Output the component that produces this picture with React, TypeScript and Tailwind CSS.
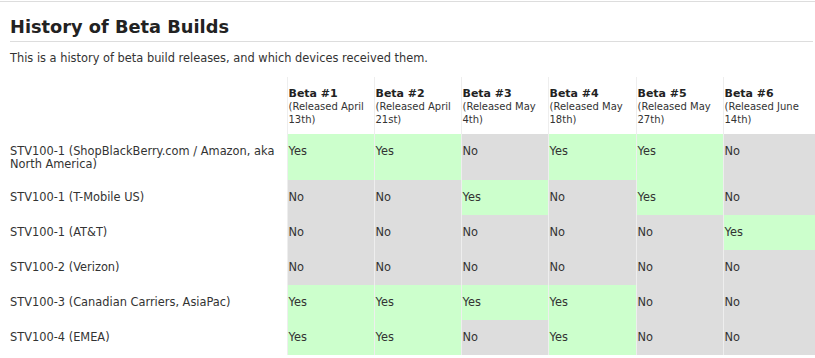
import React from 'react';

const BETAS = [
    { name: 'Beta #1', note: '(Released April 13th)' },
    { name: 'Beta #2', note: '(Released April 21st)' },
    { name: 'Beta #3', note: '(Released May 4th)' },
    { name: 'Beta #4', note: '(Released May 18th)' },
    { name: 'Beta #5', note: '(Released May 27th)' },
    { name: 'Beta #6', note: '(Released June 14th)' },
];

const DEVICES = [
    { name: 'STV100-1 (ShopBlackBerry.com / Amazon, aka North America)', got: [1, 1, 0, 1, 1, 0] },
    { name: 'STV100-1 (T-Mobile US)', got: [0, 0, 1, 0, 1, 0] },
    { name: 'STV100-1 (AT&T)', got: [0, 0, 0, 0, 0, 1] },
    { name: 'STV100-2 (Verizon)', got: [0, 0, 0, 0, 0, 0] },
    { name: 'STV100-3 (Canadian Carriers, AsiaPac)', got: [1, 1, 1, 1, 0, 0] },
    { name: 'STV100-4 (EMEA)', got: [1, 1, 0, 1, 0, 0] },
];

const BetaHistory = () => {
    return (
        <div className="w-[815px] h-[358px] overflow-hidden bg-white text-[#333] font-['DejaVu_Sans',Verdana,sans-serif]">
            <div className="mt-[1px] border-t border-[#dddddd]">
                <h2 className="ml-[10px] mr-[2px] pt-[13px] pb-[2px] text-[17.8px] leading-[24px] font-bold text-[#222] border-b border-[#dddddd]">
                    History of Beta Builds
                </h2>
                <p className="ml-[10px] mt-[9px] text-[11.4px] leading-[14px]">
                    This is a history of beta build releases, and which devices received them.
                </p>
                <table className="mt-[12px] w-[820px] table-fixed border-collapse text-[11.4px] leading-[13px]">
                    <colgroup>
                        <col className="w-[287px]" />
                        <col className="w-[87px]" />
                        <col className="w-[87px]" />
                        <col className="w-[87px]" />
                        <col className="w-[88px]" />
                        <col className="w-[87px]" />
                        <col className="w-[97px]" />
                    </colgroup>
                    <thead>
                        <tr className="h-[57px]">
                            <th />
                            {BETAS.map((b) => (
                                <th key={b.name} className="border-l border-[#eeeeee] pl-[1px] pt-[10px] pr-[4px] text-left align-top font-normal">
                                    <div className="font-bold text-[11px] text-[#222]">{b.name}</div>
                                    <div className="text-[10px] leading-[13px]">{b.note}</div>
                                </th>
                            ))}
                        </tr>
                    </thead>
                    <tbody>
                        {DEVICES.map((d, i) => (
                            <tr key={d.name} className={i === 0 ? 'h-[46px]' : 'h-[35px]'}>
                                <td className="pl-[10px] pr-[1px] pt-[11px] align-top">{d.name}</td>
                                {d.got.map((g, j) => (
                                    <td
                                        key={j}
                                        className={`border-l border-[#eeeeee] pl-[1px] pt-[11px] align-top ${g ? 'bg-[#ccffcc]' : 'bg-[#dddddd]'}`}
                                    >
                                        {g ? 'Yes' : 'No'}
                                    </td>
                                ))}
                            </tr>
                        ))}
                    </tbody>
                </table>
            </div>
        </div>
    );
};

export default BetaHistory;
